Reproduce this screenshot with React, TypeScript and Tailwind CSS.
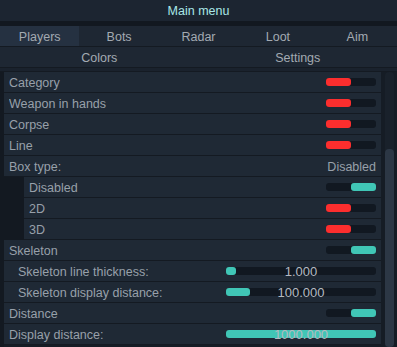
import React from "react";

type Row =
  | { kind: "toggle"; label: string; on: boolean; indent?: number }
  | { kind: "text"; label: string; value: string }
  | { kind: "slider"; label: string; frac: number; value: string; indent?: number };

const rows: Row[] = [
  { kind: "toggle", label: "Category", on: false },
  { kind: "toggle", label: "Weapon in hands", on: false },
  { kind: "toggle", label: "Corpse", on: false },
  { kind: "toggle", label: "Line", on: false },
  { kind: "text", label: "Box type:", value: "Disabled" },
  { kind: "toggle", label: "Disabled", on: true, indent: 2 },
  { kind: "toggle", label: "2D", on: false, indent: 2 },
  { kind: "toggle", label: "3D", on: false, indent: 2 },
  { kind: "toggle", label: "Skeleton", on: true },
  { kind: "slider", label: "Skeleton line thickness:", frac: 0.06, value: "1.000", indent: 1 },
  { kind: "slider", label: "Skeleton display distance:", frac: 0.16, value: "100.000", indent: 1 },
  { kind: "toggle", label: "Distance", on: true },
  { kind: "slider", label: "Display distance:", frac: 1, value: "1000.000" },
];

function Toggle({ on }: { on: boolean }) {
  return (
    <div className="w-[50px] h-[8px] rounded-[3px] bg-[#111821] flex">
      {on ? (
        <>
          <div className="w-[25px]" />
          <div className="w-[25px] h-full rounded-[3px] bg-[#40c6b6]" />
        </>
      ) : (
        <div className="w-[25px] h-full rounded-[3px] bg-[#fc2e2e]" />
      )}
    </div>
  );
}

function Slider({ frac, value }: { frac: number; value: string }) {
  return (
    <div className="relative w-[150px] h-[8px] rounded-[3px] bg-[#111821]">
      <div
        className="h-full rounded-[3px] bg-[#40c6b6]"
        style={{ width: `${Math.max(10, frac * 150)}px` }}
      />
      <div className="absolute inset-x-0 top-[-4px] h-[16px] flex items-center justify-center text-[13px] leading-none text-[#b4bac1] pt-[1px]">
        {value}
      </div>
    </div>
  );
}

export default function App() {
  const tabs = ["Players", "Bots", "Radar", "Loot", "Aim"];
  return (
    <div
      className="w-[397px] h-[347px] overflow-hidden bg-[#151c25] flex flex-col text-[12.5px]"
      style={{ fontFamily: '"Liberation Sans", Arial, sans-serif' }}
    >
      <div className="h-[21px] bg-[#1c2531] flex items-center justify-center text-[#a9e8e8] pt-[2px]">
        Main menu
      </div>
      <div className="h-[5px] bg-[#121820]" />
      <div className="h-[21px] flex bg-[#1e2733] border-b border-[#141a22] text-[#a3aab2]">
        {tabs.map((t, i) => (
          <div
            key={t}
            className={
              "flex-1 flex items-center justify-center pt-[2px] " +
              (i === 0 ? "bg-[#253141]" : "")
            }
          >
            {t}
          </div>
        ))}
      </div>
      <div className="h-[20px] flex bg-[#1e2733] text-[#a3aab2]">
        <div className="flex-1 flex items-center justify-center pt-[2px]">Colors</div>
        <div className="flex-1 flex items-center justify-center pt-[2px]">Settings</div>
      </div>
      <div className="h-[5px] border-t border-[#141a22] bg-[#1a222d] border-b" />
      <div className="flex-1 flex min-h-0">
        <div className="w-[4px] bg-[#131921]" />
        <div className="w-[377px] flex flex-col">
          {rows.map((r, i) => {
            const indent = "indent" in r ? r.indent ?? 0 : 0;
            return (
              <div key={i} className="h-[21px] flex">
                {indent === 2 && <div className="w-[20px] bg-[#131921]" />}
                <div
                  className={
                    "flex-1 flex items-center border-b border-[#141a22] bg-[#1f2935] text-[#98a0aa] pr-[5px] " +
                    (indent === 1 ? "pl-[14px]" : "pl-[5px]")
                  }
                >
                  <span className="flex-1 truncate pt-[2px]">{r.label}</span>
                  {r.kind === "toggle" && <Toggle on={r.on} />}
                  {r.kind === "text" && <span className="text-[#98a0aa] pt-[2px]">{r.value}</span>}
                  {r.kind === "slider" && <Slider frac={r.frac} value={r.value} />}
                </div>
              </div>
            );
          })}
        </div>
        <div className="flex-1 flex justify-center pl-[4px] pr-[3px]">
          <div className="w-[9px] h-full rounded-t-[4px] bg-[#19212b] flex flex-col">
            <div className="h-[77px]" />
            <div className="flex-1 rounded-[4px] bg-[#2c3745]" />
          </div>
        </div>
      </div>
    </div>
  );
}
